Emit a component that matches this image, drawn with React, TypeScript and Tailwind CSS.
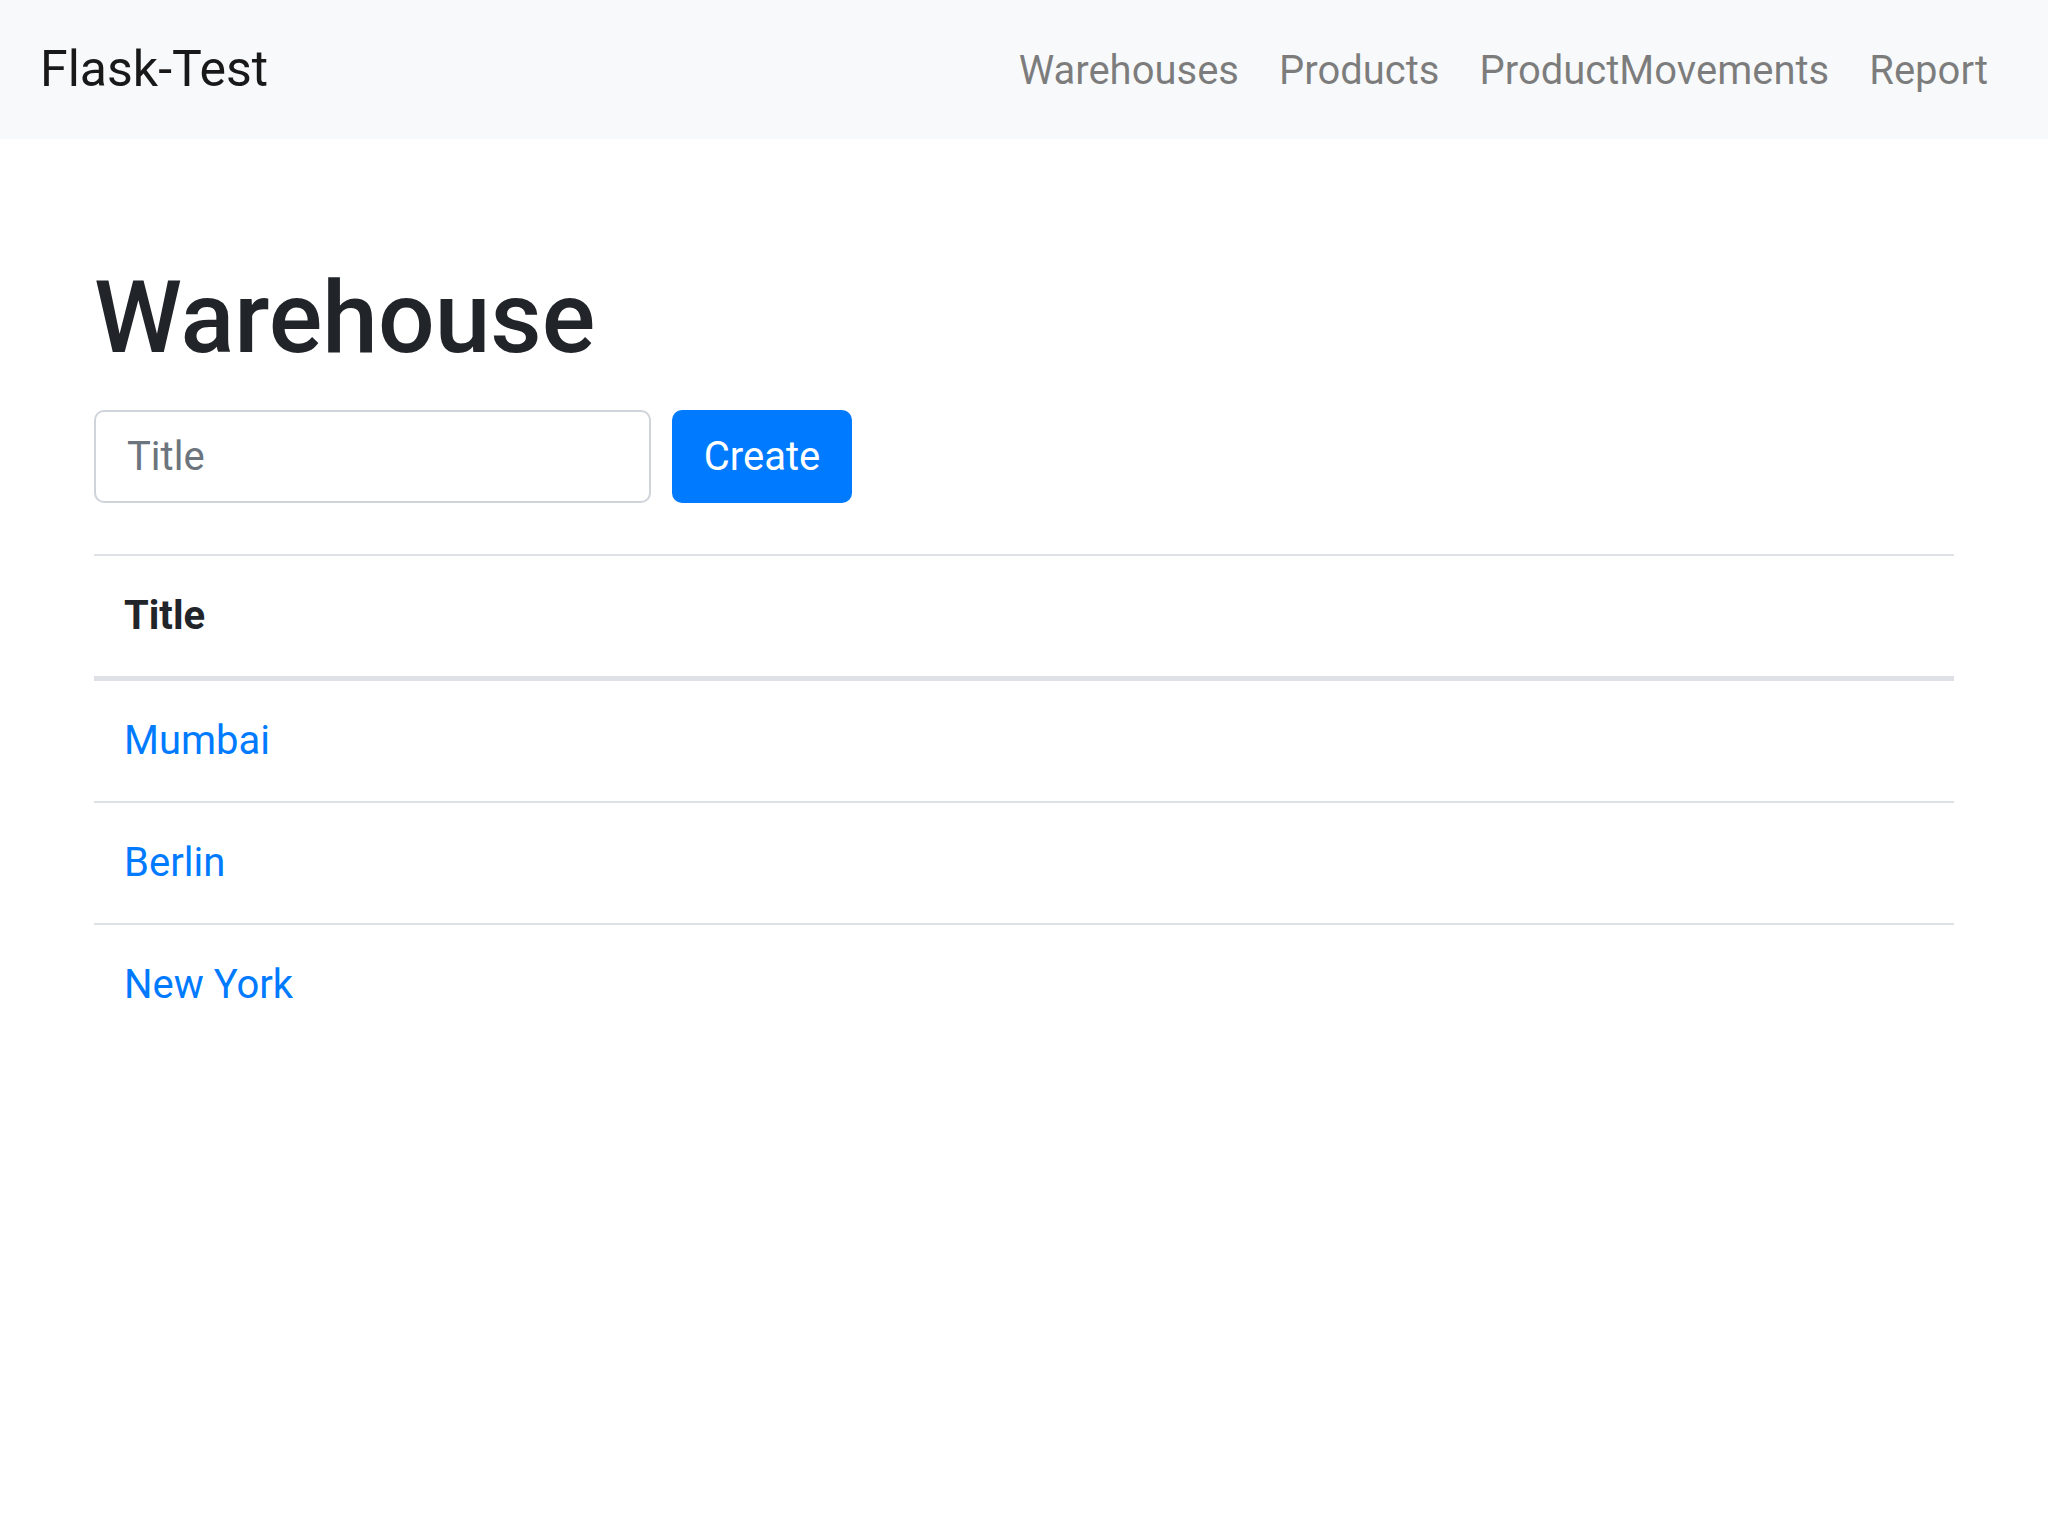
import { useState } from 'react';

export default function App() {
  const [title, setTitle] = useState('');
  const [warehouses, setWarehouses] = useState<{ id: number; title: string }[]>([
    { id: 1, title: 'Mumbai' },
    { id: 2, title: 'Berlin' },
    { id: 3, title: 'New York' },
  ]);

  function handleSubmit(e: React.FormEvent) {
    e.preventDefault();
    if (!title.trim()) return;
    setWarehouses([...warehouses, { id: Date.now(), title }]);
    setTitle('');
  }

  return (
    <div className="min-h-screen bg-white font-[Roboto,'Liberation_Sans',sans-serif] text-[#212529]">
      {/* navbar */}
      <nav className="h-[139px] bg-[#f8f9fa] flex items-center justify-between px-[40px]">
        <a href="#" className="text-[50px] leading-[75px] text-black/90">
          Flask-Test
        </a>
        <ul className="flex mt-[3px]">
          {['Warehouses', 'Products', 'ProductMovements', 'Report'].map((n) => (
            <li key={n}>
              <a href="#" className="block px-[20px] text-[40px] leading-[60px] text-black/50">
                {n}
              </a>
            </li>
          ))}
        </ul>
      </nav>

      <div className="px-[94px]">
        <h1 className="mt-[119px] text-[100px] leading-[120px] font-medium">Warehouse</h1>

        {/* create form */}
        <form onSubmit={handleSubmit} className="mt-[32px] flex gap-[21px]">
          <input
            value={title}
            onChange={(e) => setTitle(e.target.value)}
            placeholder="Title"
            className="w-[557px] h-[93px] border-2 border-[#ced4da] rounded-[10px] px-[31px] text-[40px] text-[#495057] placeholder:text-[#6c757d] outline-none"
          />
          <button
            type="submit"
            className="w-[180px] h-[93px] bg-[#007bff] text-white rounded-[10px] text-[40px]"
          >
            Create
          </button>
        </form>

        {/* table */}
        <table className="mt-[51px] w-full border-collapse text-[40px] leading-[60px]">
          <thead>
            <tr>
              <th className="border-t-2 border-b-[5px] border-[#dee2e6] p-[30px] text-left font-bold">Title</th>
            </tr>
          </thead>
          <tbody>
            {warehouses.map((w) => (
              <tr key={w.id}>
                <td className="border-t-2 border-[#dee2e6] p-[30px]">
                  <a href="#" className="text-[#007bff]">{w.title}</a>
                </td>
              </tr>
            ))}
          </tbody>
        </table>
      </div>
    </div>
  );
}
